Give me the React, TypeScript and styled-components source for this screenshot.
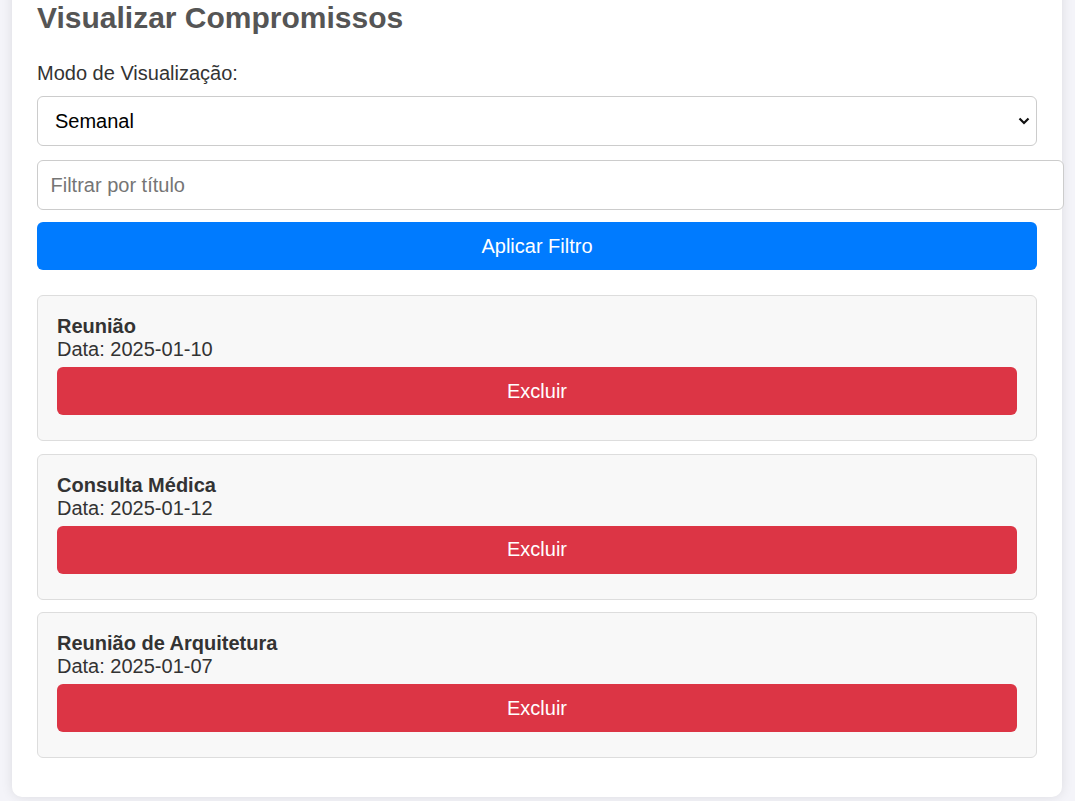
import React, { useState } from "react";
import styled, { createGlobalStyle } from "styled-components";

const GlobalStyle = createGlobalStyle`
  html, body {
    margin: 0;
    padding: 0;
    background: #f4f4f9;
    font-family: "Liberation Sans", Arial, sans-serif;
    color: #333;
  }
  * { font-family: "Liberation Sans", Arial, sans-serif; }
`;

const Page = styled.div`
  padding: 0 0 20px;
`;

const Card = styled.div`
  width: 1000px;
  margin: -49px 0 0 12px;
  padding: 25px;
  background: #fff;
  border-radius: 10px;
  box-shadow: 0 0 12px rgba(0, 0, 0, 0.1);
`;

const Title = styled.h2`
  margin: 25px 0 27px;
  font-size: 30px;
  line-height: 34px;
  font-weight: bold;
  color: #555;
`;

const Label = styled.label`
  display: block;
  font-size: 20px;
  line-height: 23px;
  color: #333;
  margin-bottom: 11px;
`;

const SelectWrap = styled.div`
  position: relative;
  margin-bottom: 14px;
`;

const Select = styled.select`
  display: block;
  width: 100%;
  height: 50px;
  box-sizing: border-box;
  padding: 0 17px;
  font-size: 20px;
  color: #000;
  background: #fff;
  border: 1px solid #ccc;
  border-radius: 6px;
  appearance: none;
  -webkit-appearance: none;
  outline: none;
`;

const Chevron = styled.svg`
  position: absolute;
  right: 7px;
  top: 20px;
  width: 12px;
  height: 10px;
  pointer-events: none;
`;

const Input = styled.input`
  display: block;
  width: 1000px;
  box-sizing: content-box;
  height: 23px;
  padding: 12.5px 12.5px;
  font-size: 20px;
  line-height: 23px;
  color: #333;
  border: 1px solid #ccc;
  border-radius: 6px;
  margin: 0 0 12px;
  outline: none;
  &::placeholder { color: #757575; }
`;

const Button = styled.button<{ $variant: "primary" | "danger" }>`
  display: block;
  width: 100%;
  height: 48px;
  padding: 0;
  border: none;
  border-radius: 6px;
  font-size: 20px;
  color: #fff;
  cursor: pointer;
  background: ${(p) => (p.$variant === "primary" ? "#007bff" : "#dc3545")};
`;

const List = styled.div`
  display: flex;
  flex-direction: column;
  gap: 12.5px;
  margin-top: 25px;
  margin-bottom: 14px;
`;

const Item = styled.div`
  height: 146px;
  box-sizing: border-box;
  padding: 19px 19px 0;
  background: #f8f8f8;
  border: 1px solid #ddd;
  border-radius: 6px;
`;

const ItemTitle = styled.div`
  font-size: 20px;
  line-height: 23px;
  font-weight: bold;
  color: #333;
`;

const ItemDate = styled.div`
  font-size: 20px;
  line-height: 23px;
  color: #333;
  margin-bottom: 6px;
`;

const items = [
  { title: "Reunião", date: "2025-01-10" },
  { title: "Consulta Médica", date: "2025-01-12" },
  { title: "Reunião de Arquitetura", date: "2025-01-07" },
];

export default function App() {
  const [mode, setMode] = useState("semanal");
  return (
    <Page>
      <GlobalStyle />
      <Card>
        <Title>Visualizar Compromissos</Title>
        <Label htmlFor="modo">Modo de Visualização:</Label>
        <SelectWrap>
          <Select id="modo" value={mode} onChange={(e) => setMode(e.target.value)}>
            <option value="diario">Diário</option>
            <option value="semanal">Semanal</option>
            <option value="mensal">Mensal</option>
          </Select>
          <Chevron viewBox="0 0 12 10">
            <path d="M1.5 2.5 L6 7 L10.5 2.5" fill="none" stroke="#111" strokeWidth="2.2" />
          </Chevron>
        </SelectWrap>
        <Input placeholder="Filtrar por título" />
        <Button $variant="primary">Aplicar Filtro</Button>
        <List>
          {items.map((it) => (
            <Item key={it.title}>
              <ItemTitle>{it.title}</ItemTitle>
              <ItemDate>Data: {it.date}</ItemDate>
              <Button $variant="danger">Excluir</Button>
            </Item>
          ))}
        </List>
      </Card>
    </Page>
  );
}
